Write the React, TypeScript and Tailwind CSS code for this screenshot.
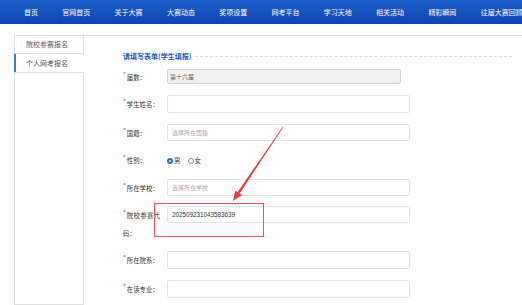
import React from "react";

const navItems = ["首页", "官网首页", "关于大赛", "大赛动态", "奖项设置", "网考平台", "学习天地", "相关活动", "精彩瞬间", "往届大赛回顾"];

function Star() {
  return <span className="text-[#e53935] text-[6px] relative -top-[3px] mr-[1px]">*</span>;
}

function Label({ children }: { children: React.ReactNode }) {
  return (
    <div className="w-[44px] shrink-0 text-[6.4px] leading-[17px] text-[#333] whitespace-nowrap pt-[1px]">
      <Star />
      {children}
    </div>
  );
}

function Input({ value, placeholder, h = "h-[17px]" }: { value?: string; placeholder?: string; h?: string }) {
  return (
    <div className={`w-[243px] ${h} border border-[#e2e2e2] rounded-[2px] bg-white flex items-center pl-[4px]`}>
      {value ? (
        <span className="text-[6.3px] text-[#333] font-['Liberation_Sans',sans-serif]">{value}</span>
      ) : placeholder ? (
        <span className="text-[6px] text-[#aaa]">{placeholder}</span>
      ) : null}
    </div>
  );
}

export default function App() {
  return (
    <div className="relative w-[522px] h-[305px] overflow-hidden bg-white font-['Noto_Sans_CJK_SC','Noto_Sans',sans-serif]">
      <div className="h-[24px] bg-gradient-to-b from-[#1f60cc] to-[#0c45b0] flex items-center pl-[24px] gap-[24.3px] text-white text-[7px] whitespace-nowrap">
        {navItems.map((n) => (
          <span key={n}>{n}</span>
        ))}
      </div>
      <div className="h-[11px]" />
      <div className="flex h-[270px]">
        <div className="ml-[14px] w-[70px] flex flex-col">
          <div className="h-[19px] border border-[#e0e0e0] flex items-center pl-[11px] text-[7px] text-[#555]">院校参赛报名</div>
          <div className="h-[18px] border-l-2 border-[#3b7dd8] flex items-center pl-[10px] text-[7px] text-[#555]">个人网考报名</div>
          <div className="flex-1 border border-[#e0e0e0]" />
        </div>
        <div className="flex-1 border-t border-[#e3e3e3]">
          <div className="pl-[39px] pt-[14px]">
            <div className="flex items-center h-[12px]">
              <span className="text-[7px] font-bold text-[#1c5cb8] whitespace-nowrap">请填写表单(学生填报)</span>
              <div className="flex-1 border-t border-dashed border-[#dcdcdc] ml-[4px] mr-[10px]" />
            </div>
            <div className="flex items-start mt-[7px] h-[17px]">
              <div className="w-[44px] shrink-0 text-[6.4px] leading-[15px] text-[#333] whitespace-nowrap pt-[1px]">
                <Star />
                届数：
              </div>
              <div className="w-[234px] h-[15px] border border-[#d6d6d6] rounded-[2px] bg-[#f1f1f1] flex items-center pl-[2px]">
                <span className="text-[6px] text-[#666]">第十六届</span>
              </div>
            </div>
            <div className="flex items-start mt-[9px] h-[18px]">
              <Label>学生姓名：</Label>
              <Input h="h-[18px]" />
            </div>
            <div className="flex items-start mt-[11px] h-[17px]">
              <Label>国籍：</Label>
              <Input placeholder="选择所在国籍" />
            </div>
            <div className="flex items-start mt-[10px] h-[17px]">
              <Label>性别：</Label>
              <div className="flex items-center h-[17px] text-[6.5px] text-[#333] mt-[1px]">
                <span className="w-[6px] h-[6px] rounded-full bg-[#1e6fe8] flex items-center justify-center">
                  <span className="w-[2px] h-[2px] rounded-full bg-white" />
                </span>
                <span className="ml-[1px]">男</span>
                <span className="ml-[7px] w-[6px] h-[6px] rounded-full border border-[#888] bg-white" />
                <span className="ml-[1px]">女</span>
              </div>
            </div>
            <div className="flex items-start mt-[11px] h-[17px]">
              <Label>所在学校：</Label>
              <Input placeholder="选择所在学校" />
            </div>
            <div className="flex items-start mt-[10px] h-[34px]">
              <div className="w-[44px] shrink-0 text-[6.4px] leading-[18px] text-[#333] whitespace-nowrap pt-[1px]">
                <Star />
                <span className="tracking-[0.3px]">院校参赛代</span>
                <br />
                码：
              </div>
              <Input value="202509231043583639" />
            </div>
            <div className="flex items-start mt-[11px] h-[18px]">
              <Label>所在院系：</Label>
              <Input h="h-[18px]" />
            </div>
            <div className="flex items-start mt-[11px] h-[18px]">
              <Label>在读专业：</Label>
              <Input h="h-[18px]" />
            </div>
          </div>
        </div>
      </div>
      <div className="absolute left-[154px] top-[203px] w-[110px] h-[34px] border-[1.5px] border-[#ee5256] pointer-events-none" />
      <svg className="absolute left-0 top-0 pointer-events-none" width="522" height="305">
        <polygon points="283.25,127.17 282.75,126.83 237.66,192.07 239.64,193.43" fill="#e8363a" />
        <polygon points="233,201 235.35,190.49 241.95,195.01" fill="#e8363a" />
      </svg>
    </div>
  );
}
